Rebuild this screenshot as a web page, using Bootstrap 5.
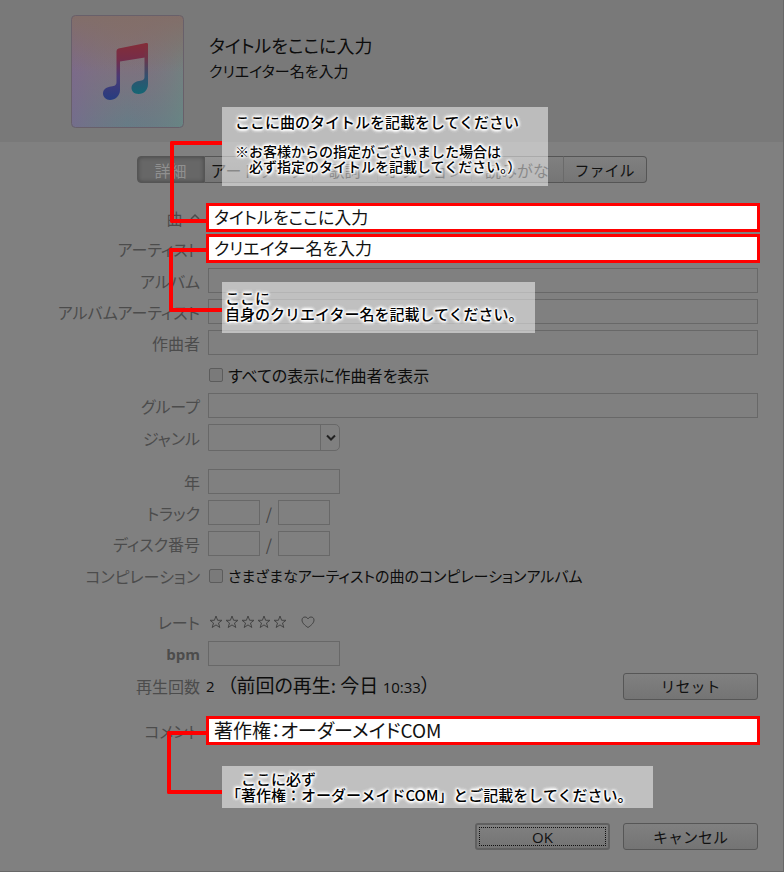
<!DOCTYPE html>
<html lang="ja">
<head>
<meta charset="utf-8">
<meta name="viewport" content="width=device-width, initial-scale=1">
<title>曲の情報</title>
<link href="https://cdn.jsdelivr.net/npm/bootstrap@5.3.0/dist/css/bootstrap.min.css" rel="stylesheet">
<style>
body{background:#808080;color:#0c0c0c;font-family:"Noto Sans CJK JP",sans-serif;font-size:16px;line-height:24px;font-feature-settings:"palt"}
.dialog{min-height:100vh;border-right:1px solid #686868;border-bottom:1px solid #686868}
.song-head{background:#797979;height:142px;padding:15px 26px 0 71px}
.artwork{width:113px;height:113px}
.song-name{font-size:18px;line-height:26px}
.song-by{font-size:15px;line-height:26px}
.head-text{padding:17px 0 0 25px}
.tabbar{margin:14px 0 20px;height:27px}
.tabbar .btn{border:1px solid #555;border-left-width:0;background:linear-gradient(#808080,#757575);color:#111;font-size:16px;line-height:24px;padding:0;border-radius:0}
.tabbar .btn:first-child{border-left-width:1px;border-radius:4px 0 0 4px;background:#676767;color:#909090;box-shadow:inset 0 0 4px #444}
.tabbar .btn:last-child{border-radius:0 4px 4px 0;font-size:15px}
.tabbar .btn+.btn:not(:last-child){border-right-color:#6a6a6a}
.w-a{width:68px}.w-b{width:108px}.w-c{width:65px}.w-d{width:94px}.w-e{width:92px}.w-f{width:83px}
.line{margin-top:6px;min-height:25px;padding-right:25px}
.line-first{margin-top:0}
.line-tight{margin-top:2px}
.line-next{margin-top:5px}
.line-tall{min-height:28px}
.line-check{min-height:27px}
.line-group{margin-top:18px}
.line-note{margin-top:16px}
.cap{width:200px;margin-right:8px;color:#4c4c4c;text-align:right;white-space:nowrap}
.box{height:25px;border:1px solid #686868;border-radius:0;background:#808080;padding:0 4px;min-width:0}
.box-year{width:132px}
.box-num{width:52px}
.marked{height:29px;border:3px solid #f00;background:#fff;color:#111;font-size:17px;line-height:23px;padding:0 5px 2px;margin:0 -2px;position:relative;z-index:2;border-radius:0;min-width:0;font-feature-settings:"palt"}
.marked-note{font-size:19px}
.genre{width:132px;height:27px;border:1px solid #686868;border-radius:0 5px 5px 0;appearance:none;background:#808080}
.genre-arrow{right:0;top:0;width:20px;height:27px;border-left:1px solid #686868;pointer-events:none}
.tick{appearance:none;width:14px;height:14px;border:1px solid #5c5c5c;border-radius:2px;background:#7a7a7a;margin:0 5px 0 1px}
.tick-text{font-size:15px}
.slash{width:18px;text-align:center;color:#444}
.star{width:16px;height:16px}
.rate{background:none;border:0;padding:0;line-height:0}
.push{width:135px;height:27px;border:1px solid #565656;border-radius:3px;background:linear-gradient(#808080,#747474);color:#111;font-size:15px;line-height:22px;padding:0}
.push-ok{font-family:"Open Sans",sans-serif;border-width:2px;border-color:#606060;outline:1px dotted #111;outline-offset:-5px}
.latin{font-family:"Open Sans",sans-serif;font-size:15px}
.cap .latin{font-weight:700}
.count{width:21px;margin-left:-2px}
.foot{margin-top:78px;padding-right:25px;gap:13px}
.callout{position:absolute;left:222px;z-index:3;background:rgba(255,255,255,.5);color:#000;font-size:15px;line-height:16px;font-weight:500;font-feature-settings:normal;white-space:nowrap;text-shadow:0 0 2px #fff,0 0 2px #fff,0 0 2px #fff,0 0 3px #fff,0 0 3px #fff,0 0 3px #fff,0 0 4px #fff,0 0 4px #fff,0 0 4px #fff,0 0 4px #fff}
.callout-title{top:-96px;width:326px;height:79px;padding:7px 13px}
.callout-title small{display:block;font-size:14px;line-height:15px;margin-top:14px}
.callout-by{top:48px;width:313px;height:51px;padding:8px 3px}
.callout-note{top:50px;width:431px;height:42px;padding:5px 4px}
.wire{position:absolute;border:solid #f00;border-width:4px 0 4px 4px;border-radius:2px 0 0 2px;z-index:1}
.wire-title{left:170px;top:-62px;width:52px;height:82px}
.wire-by{left:169px;top:14px;width:53px;height:64px}
.wire-note{left:167px;top:15px;width:55px;height:63px}
</style>
</head>
<body>
<main class="dialog">
<header class="song-head d-flex align-items-start">
<svg class="artwork flex-shrink-0" viewBox="0 0 113 113" aria-hidden="true">
<defs>
<linearGradient id="bgA" x1="0" y1="0" x2="0" y2="1"><stop offset="0" stop-color="#876f6c"/><stop offset=".5" stop-color="#7d727f"/><stop offset="1" stop-color="#667c86"/></linearGradient>
<linearGradient id="bgB" x1="0" y1="0" x2="1" y2="0"><stop offset="0" stop-color="#7b6690" stop-opacity=".65"/><stop offset=".5" stop-color="#7b7080" stop-opacity="0"/><stop offset="1" stop-color="#688f82" stop-opacity=".5"/></linearGradient>
<linearGradient id="bgC" x1="0" y1="0" x2="0" y2="1"><stop offset="0" stop-color="#826e69"/><stop offset=".5" stop-color="#826e69" stop-opacity="0"/></linearGradient>
<linearGradient id="noteG" x1="0" y1="0" x2="0" y2="1"><stop offset="0" stop-color="#842d38"/><stop offset=".28" stop-color="#752d48"/><stop offset=".6" stop-color="#493a76"/><stop offset="1" stop-color="#263c80"/></linearGradient>
<linearGradient id="noteR" x1="0" y1="0" x2="0" y2="1"><stop offset="0" stop-color="#842d38"/><stop offset=".28" stop-color="#703448"/><stop offset=".65" stop-color="#33506f"/><stop offset="1" stop-color="#146674"/></linearGradient>
</defs>
<rect x=".5" y=".5" width="112" height="112" rx="4" fill="url(#bgA)"/>
<rect x=".5" y=".5" width="112" height="112" rx="4" fill="url(#bgB)"/>
<rect x=".5" y=".5" width="112" height="112" rx="4" fill="url(#bgC)" stroke="#68606a"/>
<path fill="url(#noteG)" d="M45.500 36Q45.500 34 47.500 33.500L75 28Q77 27.700 77 30V42L49 46.500V75C49 81 44 85 39 85C35 85 32 82 32 78.500C32 74 36 72 40 71.500C44 71 45.500 70 45.500 67Z"/>
<path fill="url(#noteR)" d="M73.500 30L75 28Q77 27.700 77 30V69C77 75 73 79 67.500 79C63 79 60.500 76 60.500 73C60.500 69 64 66.500 68 66C72 65.500 73.500 64.500 73.500 62Z"/>
</svg>
<div class="head-text"><div class="song-name">タイトルをここに入力</div><div class="song-by">クリエイター名を入力</div></div>
</header>
<nav class="tabbar d-flex justify-content-center" aria-label="情報の種類">
<button type="button" class="btn w-a">詳細</button><button type="button" class="btn w-b">アートワーク</button><button type="button" class="btn w-c">歌詞</button><button type="button" class="btn w-d">オプション</button><button type="button" class="btn w-e">読みがな</button><button type="button" class="btn w-f">ファイル</button>
</nav>
<form>
<div class="line line-first d-flex align-items-center position-relative">
<label class="cap flex-shrink-0" for="song">曲 <svg class="ms-1" width="10" height="14" viewBox="0 0 10 14" fill="none" stroke="#4c4c4c" stroke-width="1.500"><path d="M1 6L5 2L9 6"/></svg></label><input id="song" class="marked flex-grow-1" value="タイトルをここに入力">
<span class="wire wire-title"></span>
<div class="callout callout-title">ここに曲のタイトルを記載をしてください<small>※お客様からの指定がございました場合は<br>　必ず指定のタイトルを記載してください。）</small></div>
</div>
<div class="line line-tight d-flex align-items-center position-relative">
<label class="cap flex-shrink-0" for="artist">アーティスト</label><input id="artist" class="marked flex-grow-1" value="クリエイター名を入力">
<span class="wire wire-by"></span>
<div class="callout callout-by">ここに<br>自身のクリエイター名を記載してください。</div>
</div>
<div class="line line-next d-flex align-items-center"><label class="cap flex-shrink-0" for="album">アルバム</label><input id="album" class="box flex-grow-1"></div>
<div class="line d-flex align-items-center"><label class="cap flex-shrink-0" for="albumartist">アルバムアーティスト</label><input id="albumartist" class="box flex-grow-1"></div>
<div class="line d-flex align-items-center"><label class="cap flex-shrink-0" for="composer">作曲者</label><input id="composer" class="box flex-grow-1"></div>
<div class="line line-check d-flex align-items-center"><span class="cap flex-shrink-0"></span><input type="checkbox" id="showall" class="tick"><label for="showall">すべての表示に作曲者を表示</label></div>
<div class="line line-next d-flex align-items-center"><label class="cap flex-shrink-0" for="grouping">グループ</label><input id="grouping" class="box flex-grow-1"></div>
<div class="line d-flex align-items-center"><label class="cap flex-shrink-0" for="genre">ジャンル</label>
<div class="position-relative d-flex"><select id="genre" class="genre"><option></option></select>
<span class="genre-arrow position-absolute d-flex align-items-center justify-content-center"><svg width="10" height="7" viewBox="0 0 10 7" fill="none" stroke="#222" stroke-width="2"><path d="M1 1.500L5 5.500L9 1.500"/></svg></span></div></div>
<div class="line line-group d-flex align-items-center"><label class="cap flex-shrink-0" for="year">年</label><input id="year" class="box box-year"></div>
<div class="line d-flex align-items-center"><label class="cap flex-shrink-0" for="track">トラック</label><input id="track" class="box box-num"><span class="slash">/</span><input class="box box-num" aria-label="トラック総数"></div>
<div class="line d-flex align-items-center"><label class="cap flex-shrink-0" for="disc">ディスク番号</label><input id="disc" class="box box-num"><span class="slash">/</span><input class="box box-num" aria-label="ディスク総数"></div>
<div class="line line-tall d-flex align-items-center"><span class="cap flex-shrink-0">コンピレーション</span><input type="checkbox" id="comp" class="tick"><label for="comp" class="tick-text">さまざまなアーティストの曲のコンピレーションアルバム</label></div>
<svg class="d-none"><symbol id="st" viewBox="0 0 16 16"><path d="M8 2L9.600 6.300H14L10.500 9L11.800 13.500L8 10.900L4.200 13.500L5.500 9L2 6.300H6.400Z" fill="none" stroke="#444"/></symbol></svg>
<div class="line line-group line-tall d-flex align-items-center"><span class="cap flex-shrink-0">レート</span><button type="button" class="rate" aria-label="レート"><svg class="star"><use href="#st"/></svg><svg class="star"><use href="#st"/></svg><svg class="star"><use href="#st"/></svg><svg class="star"><use href="#st"/></svg><svg class="star"><use href="#st"/></svg></button>
<button type="button" class="rate ms-2 ps-1" aria-label="ラブ"><svg class="star" viewBox="0 0 16 16"><path d="M8 13.500C5 11.500 2 9 2 6C2 4.200 3.300 3 5 3C6.500 3 7.500 4 8 5C8.500 4 9.500 3 11 3C12.700 3 14 4.200 14 6C14 9 11 11.500 8 13.500Z" fill="none" stroke="#444"/></svg></button></div>
<div class="line line-next d-flex align-items-center"><label class="cap flex-shrink-0" for="bpm"><span class="latin">bpm</span></label><input id="bpm" class="box box-year"></div>
<div class="line line-tall d-flex align-items-center"><span class="cap flex-shrink-0">再生回数</span><span class="latin count">2</span><span class="marked-note">（前回の再生: 今日 <span class="latin">10:33</span>）</span><button type="button" class="push ms-auto">リセット</button></div>
<div class="line line-note d-flex align-items-center position-relative">
<label class="cap flex-shrink-0" for="note">コメント</label><input id="note" class="marked marked-note flex-grow-1" value="著作権：オーダーメイドCOM">
<span class="wire wire-note"></span>
<div class="callout callout-note">　ここに必ず<br>「著作権：オーダーメイドCOM」とご記載をしてください。</div>
</div>
<div class="foot d-flex justify-content-end"><button type="button" class="push push-ok">OK</button><button type="button" class="push">キャンセル</button></div>
</form>
</main>
<script src="https://cdn.jsdelivr.net/npm/bootstrap@5.3.0/dist/js/bootstrap.bundle.min.js"></script>
</body>
</html>
